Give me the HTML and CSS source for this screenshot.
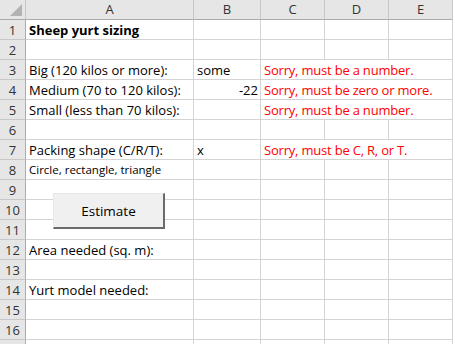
FILE: index.html
```html
<!DOCTYPE html>
<html>
<head>
<meta charset="utf-8">
<link rel="stylesheet" href="styles.css">
</head>
<body>
<div class="sheet">
  <div class="grid">
    <div class="corner"><svg width="26" height="20" viewBox="0 0 26 20"><polygon points="22,4 22,16 10,16" fill="#b3b3b3"/></svg></div>
    <div class="ch">A</div><div class="ch">B</div><div class="ch">C</div><div class="ch">D</div><div class="ch last">E</div>

    <div class="rh">1</div><div class="c bold">Sheep yurt sizing</div><div class="c"></div><div class="c"></div><div class="c"></div><div class="c"></div>
    <div class="rh">2</div><div class="c"></div><div class="c"></div><div class="c"></div><div class="c"></div><div class="c"></div>
    <div class="rh">3</div><div class="c">Big (120 kilos or more):</div><div class="c">some</div><div class="c span3 err">Sorry, must be a number.</div>
    <div class="rh">4</div><div class="c">Medium (70 to 120 kilos):</div><div class="c num">-22</div><div class="c span3 err">Sorry, must be zero or more.</div>
    <div class="rh">5</div><div class="c">Small (less than 70 kilos):</div><div class="c"></div><div class="c span3 err">Sorry, must be a number.</div>
    <div class="rh">6</div><div class="c"></div><div class="c"></div><div class="c"></div><div class="c"></div><div class="c"></div>
    <div class="rh">7</div><div class="c">Packing shape (C/R/T):</div><div class="c">x</div><div class="c span3 err">Sorry, must be C, R, or T.</div>
    <div class="rh">8</div><div class="c small">Circle, rectangle, triangle</div><div class="c"></div><div class="c"></div><div class="c"></div><div class="c"></div>
    <div class="rh">9</div><div class="c"></div><div class="c"></div><div class="c"></div><div class="c"></div><div class="c"></div>
    <div class="rh">10</div><div class="c"></div><div class="c"></div><div class="c"></div><div class="c"></div><div class="c"></div>
    <div class="rh">11</div><div class="c"></div><div class="c"></div><div class="c"></div><div class="c"></div><div class="c"></div>
    <div class="rh">12</div><div class="c">Area needed (sq. m):</div><div class="c"></div><div class="c"></div><div class="c"></div><div class="c"></div>
    <div class="rh">13</div><div class="c"></div><div class="c"></div><div class="c"></div><div class="c"></div><div class="c"></div>
    <div class="rh">14</div><div class="c">Yurt model needed:</div><div class="c"></div><div class="c"></div><div class="c"></div><div class="c"></div>
    <div class="rh">15</div><div class="c"></div><div class="c"></div><div class="c"></div><div class="c"></div><div class="c"></div>
    <div class="rh">16</div><div class="c"></div><div class="c"></div><div class="c"></div><div class="c"></div><div class="c"></div>
    <div class="rh"></div><div class="c"></div><div class="c"></div><div class="c"></div><div class="c"></div><div class="c"></div>
  </div>
  <button class="btn">Estimate</button>
</div>
</body>
</html>
```

FILE: styles.css
```css
html, body {
  margin: 0;
  padding: 0;
  background: #ffffff;
  overflow: hidden;
}
.sheet {
  position: relative;
  width: 455px;
  height: 344px;
  overflow: hidden;
  font-family: "Open Sans", "Liberation Sans", sans-serif;
}
.grid {
  display: grid;
  grid-template-columns: 26px 168px 67px 64px 64px 64px;
  grid-auto-rows: 20px;
}
.corner {
  background: #e6e6e6;
  border-right: 1px solid #c8c8c8;
  border-bottom: 1px solid #ababab;
  box-sizing: border-box;
}
.corner svg { display: block; }
.ch {
  background: #e6e6e6;
  border-right: 1px solid #c8c8c8;
  border-bottom: 1px solid #ababab;
  box-sizing: border-box;
  color: #333;
  font-size: 13px;
  line-height: 19px;
  text-align: center;
}
.rh {
  background: #e6e6e6;
  border-right: 1px solid #ababab;
  border-bottom: 1px solid #c8c8c8;
  box-sizing: border-box;
  color: #333;
  font-size: 13px;
  line-height: 20px;
  text-align: center;
}
.c {
  border-right: 1px solid #d4d4d4;
  border-bottom: 1px solid #d4d4d4;
  box-sizing: border-box;
  padding: 0 2px 0 3px;
  font-size: 13px;
  line-height: 20px;
  color: #000;
  white-space: nowrap;
  overflow: visible;
}
.bold { font-weight: bold; }
.num { text-align: right; padding-right: 2px; }
.span3 { grid-column: span 3; }
.err { color: #ff0000; letter-spacing: -0.2px; }
.small { font-size: 11.5px; }
.btn {
  position: absolute;
  left: 53px;
  top: 193px;
  width: 112px;
  height: 36px;
  background: #f0f0f0;
  border-top: 1px solid #e8e8e8;
  border-left: 1px solid #e8e8e8;
  border-right: 2px solid #6b6b6b;
  border-bottom: 2px solid #6b6b6b;
  box-sizing: border-box;
  font-family: "Open Sans", "Noto Sans", sans-serif;
  font-size: 13.5px;
  color: #000;
  padding: 0;
  margin: 0;
}
```
